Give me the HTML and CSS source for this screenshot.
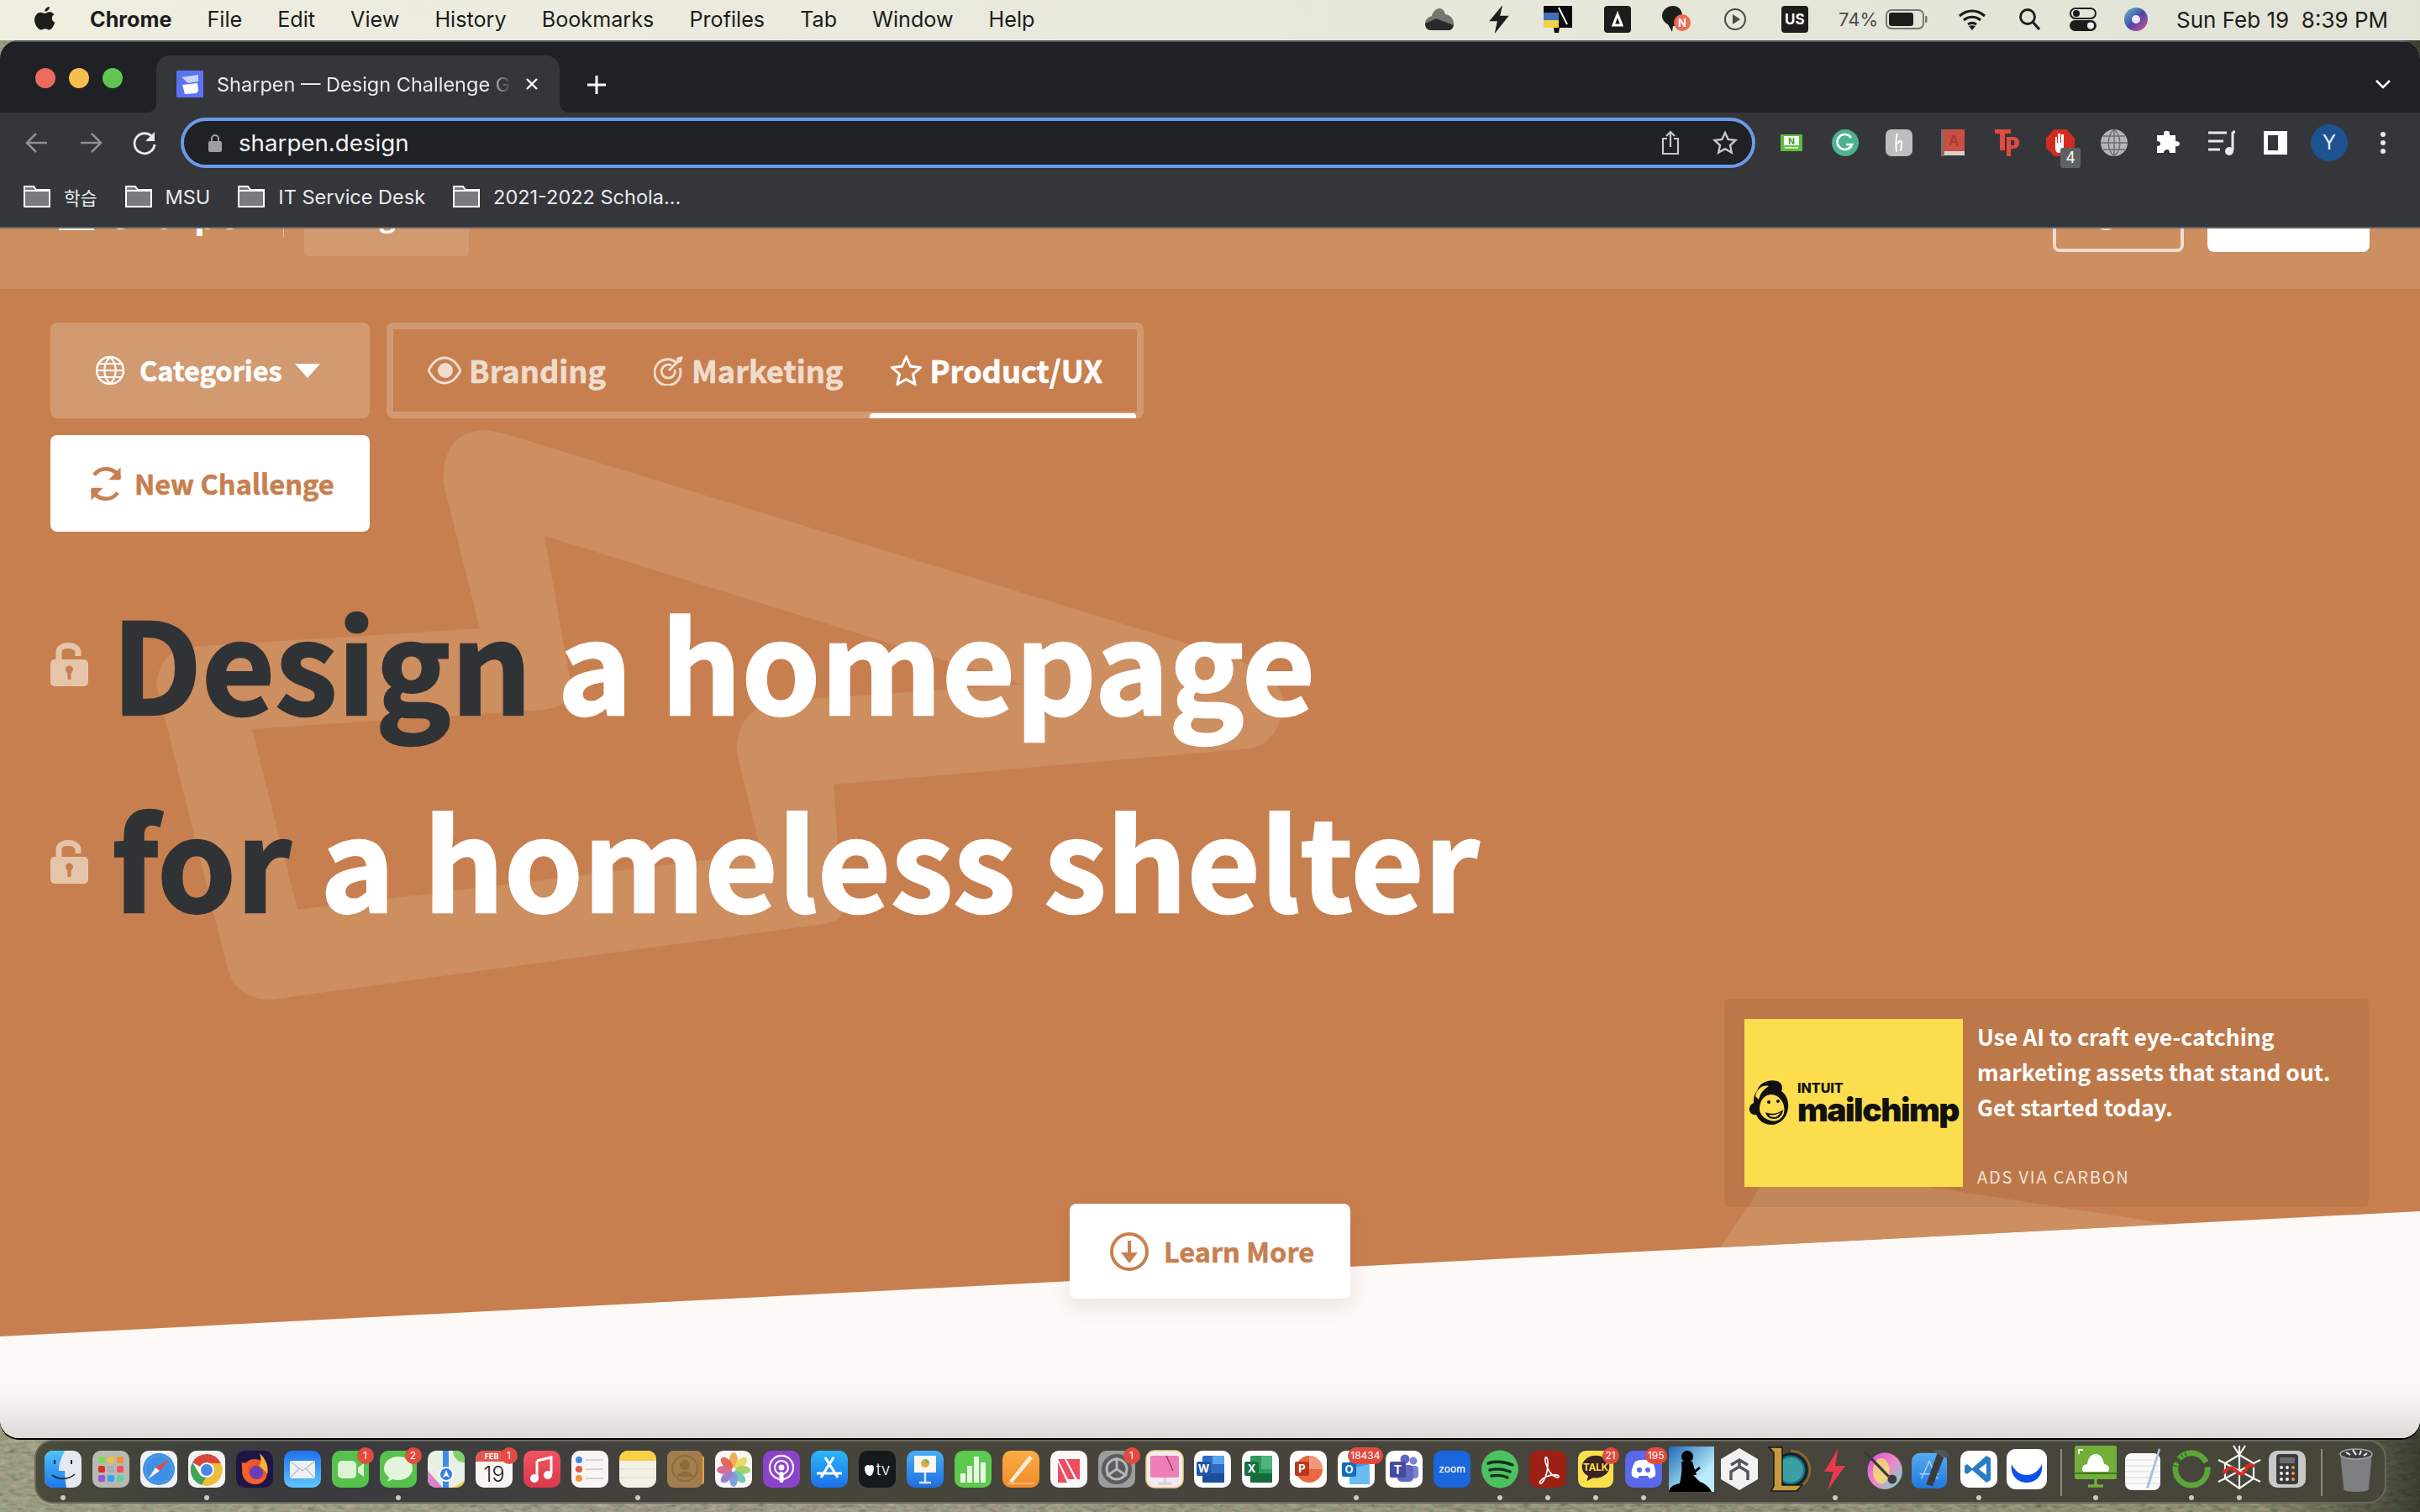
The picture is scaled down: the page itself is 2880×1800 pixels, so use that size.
FILE: index.html
```html
<!DOCTYPE html>
<html lang="en">
<head>
<meta charset="utf-8">
<title>Sharpen — Design Challenge Generator</title>
<link rel="stylesheet" href="styles.css">
</head>
<body>
<svg class="wall" width="2880" height="1800" aria-hidden="true">
  <defs>
    <filter id="grass" x="0" y="0" width="100%" height="100%">
      <feTurbulence type="fractalNoise" baseFrequency="0.09 0.22" numOctaves="4" seed="7"/>
      <feColorMatrix type="matrix" values="0.9 0.4 0 0 -0.12  0.6 0.7 0 0 -0.12  0.5 0.4 0 0 -0.12  0 0 0 0 1"/>
    </filter>
    <linearGradient id="wallshade" x1="0" x2="1" y1="0" y2="0">
      <stop offset="0" stop-color="#80836e" stop-opacity=".6"/>
      <stop offset=".3" stop-color="#7d7672" stop-opacity=".55"/>
      <stop offset=".93" stop-color="#5f6148" stop-opacity=".55"/>
      <stop offset="1" stop-color="#23261e" stop-opacity=".85"/>
    </linearGradient>
  </defs>
  <rect width="2880" height="1800" filter="url(#grass)"/>
  <rect width="2880" height="1800" fill="url(#wallshade)"/>
</svg>

<div class="desktop">
  <header class="menubar">
    <svg class="apple" viewBox="0 0 26 32"><path d="M19 1c.3 2.400-2.300 6-5.800 5.700C12.900 4 15.700 1.200 19 1zM13.300 9c1.300 0 3-1.700 5.600-1.700 1.200 0 4 .4 5.500 3-3.800 2.300-3.300 7.800.9 9.500-.9 2.800-3.600 8.700-6.700 8.700-1.800 0-2.600-1.200-4.800-1.200-2.300 0-3 1.200-4.800 1.200C5.600 28.500 1 22.500 1 17 1 11 5 7.700 8.500 7.700c2 0 3.600 1.300 4.800 1.300z" fill="#1d1d1b"/></svg>
    <span class="menu-app">Chrome</span>
    <span class="menu-item">File</span>
    <span class="menu-item">Edit</span>
    <span class="menu-item">View</span>
    <span class="menu-item">History</span>
    <span class="menu-item">Bookmarks</span>
    <span class="menu-item">Profiles</span>
    <span class="menu-item">Tab</span>
    <span class="menu-item">Window</span>
    <span class="menu-item">Help</span>
    <div class="status status-first"><svg width="40" height="30" viewBox="0 0 40 30"><path d="M20 2c4 0 6 3 7 7 5 0 10 5 10 11 0 5-3 8-7 8H10c-4 0-7-3-7-8 0-5 4-8 8-9 1-5 5-9 9-9z" fill="#767670"/><path d="M3 20l13-6 21 8c-1 4-3 6-7 6H10c-4 0-7-3-7-8z" fill="#2a2a28"/></svg></div>
    <div class="status"><svg width="26" height="34" viewBox="0 0 24 32"><path d="M16 0 1 18h9L7 32l16-20h-10z" fill="#1d1d1b"/></svg></div>
    <div class="status"><svg width="36" height="32" viewBox="0 0 36 32"><path d="M1 0h34v26H20l-1 6h-5l-1-6H1z" fill="#0b0b0b"/><path d="M19 2l10 20" stroke="#fff" stroke-width="2"/><rect x="1" y="8" width="18" height="9" fill="#3f70b8"/><rect x="1" y="17" width="18" height="9" fill="#f0d24a"/></svg></div>
    <div class="status"><svg width="32" height="32" viewBox="0 0 32 32"><rect width="32" height="32" rx="4" fill="#1d1d1b"/><path d="M16 10l-5 13h10z" fill="none" stroke="#fff" stroke-width="3"/></svg></div>
    <div class="status"><svg width="36" height="32" viewBox="0 0 36 32"><path d="M14 0c7 0 11 5 11 12s-5 12-11 12l-1 7-5-9C4 20 1 16 1 12 1 5 7 0 14 0z" fill="#1d1d1b"/><circle cx="25" cy="20" r="10" fill="#ee6a52"/><text x="25" y="25" class="svg-text" font-size="13" fill="#fff" text-anchor="middle">N</text></svg></div>
    <div class="status"><svg width="28" height="28" viewBox="0 0 28 28"><circle cx="14" cy="14" r="12" fill="none" stroke="#4a4a46" stroke-width="2"/><path d="M11 8l9 6-9 6z" fill="#4a4a46"/></svg></div>
    <div class="status"><span class="us-box">US</span></div>
    <span class="battery-pct">74%</span>
    <svg class="battery" width="50" height="24" viewBox="0 0 50 24"><rect x="1" y="1" width="44" height="22" rx="6" fill="none" stroke="#77776f" stroke-width="2"/><rect x="4" y="4" width="29" height="16" rx="3" fill="#1d1d1b"/><rect x="47" y="8" width="2.500" height="8" rx="1" fill="#77776f"/></svg>
    <div class="status status-wifi"><svg width="34" height="26" viewBox="0 0 34 26"><path d="M2 9c9-8 21-8 30 0M7 14c6-5 14-5 20 0M12 19c3-2 7-2 10 0" fill="none" stroke="#1d1d1b" stroke-width="3.200"/><path d="M17 26l-4-5c2-1 6-1 8 0z" fill="#1d1d1b"/></svg></div>
    <div class="status status-search"><svg width="28" height="28" viewBox="0 0 28 28"><circle cx="12" cy="11" r="8.500" fill="none" stroke="#1d1d1b" stroke-width="2.800"/><path d="M18 17l8 9" stroke="#1d1d1b" stroke-width="3.200"/></svg></div>
    <div class="status status-control"><svg width="32" height="28" viewBox="0 0 32 28"><rect x="1" y="1" width="30" height="12" rx="6" fill="none" stroke="#1d1d1b" stroke-width="2"/><circle cx="8" cy="7" r="4" fill="#1d1d1b"/><rect x="0" y="15" width="32" height="13" rx="6.500" fill="#1d1d1b"/><circle cx="25" cy="21.500" r="4" fill="#eee"/></svg></div>
    <div class="status status-siri"><svg width="30" height="30" viewBox="0 0 30 30"><defs><linearGradient id="siri" x1="0" y1="0" x2="1" y2="1"><stop offset="0" stop-color="#56d0c6"/><stop offset=".5" stop-color="#4b47a8"/><stop offset="1" stop-color="#e0508e"/></linearGradient></defs><circle cx="15" cy="15" r="14" fill="url(#siri)"/><circle cx="15" cy="15" r="5" fill="#e9e6f2"/></svg></div>
    <span class="clock">Sun Feb 19&nbsp; 8:39 PM</span>
  </header>

  <main class="window">
    <div class="titlebar">
      <div class="lights"><i class="light light-red"></i><i class="light light-yellow"></i><i class="light light-green"></i></div>
      <div class="tab">
        <svg class="favicon" viewBox="0 0 32 32"><rect width="32" height="32" fill="#5b73f0"/><path d="M6 8l20-3v8l-12 2z" fill="#c9d2fb"/><path d="M7 17l18-2 1 9-2 3-14 1z" fill="#fff"/></svg>
        <span class="tab-title">Sharpen — Design Challenge Generator</span>
        <svg class="tab-close" width="18" height="18" viewBox="0 0 18 18"><path d="M3 3l12 12M15 3L3 15" stroke="#fff" stroke-width="2.400"/></svg>
      </div>
      <svg class="tab-new" width="24" height="24" viewBox="0 0 24 24"><path d="M12 1v22M1 12h22" stroke="#fff" stroke-width="3"/></svg>
      <svg class="tab-list" width="20" height="12" viewBox="0 0 20 12"><path d="M2 2l8 8 8-8" fill="none" stroke="#fff" stroke-width="2.600"/></svg>
    </div>

    <div class="toolbar">
      <div class="tool"><svg width="30" height="30" viewBox="0 0 30 30"><path d="M27 15H4M14 4L3 15l11 11" fill="none" stroke="#8e9094" stroke-width="2.600"/></svg></div>
      <div class="tool"><svg width="30" height="30" viewBox="0 0 30 30"><path d="M3 15h23M16 4l11 11-11 11" fill="none" stroke="#8e9094" stroke-width="2.600"/></svg></div>
      <div class="tool"><svg width="30" height="30" viewBox="0 0 30 30"><path d="M25 9a12 12 0 1 0 2 8" fill="none" stroke="#e8eaed" stroke-width="2.800"/><path d="M27 2v11H16z" fill="#e8eaed"/></svg></div>
      <div class="omnibox">
        <svg class="lock" width="16" height="22" viewBox="0 0 16 22"><path d="M4 10V6a4 4 0 0 1 8 0v4" fill="none" stroke="#9aa0a6" stroke-width="2"/><rect y="9" width="16" height="13" rx="2" fill="#9aa0a6"/></svg>
        <span class="url">sharpen.design</span>
        <svg class="omni-share" width="24" height="30" viewBox="0 0 24 30"><path d="M8 10H3v18h18V10h-5M12 20V2M7 7l5-5 5 5" fill="none" stroke="#c6c8cb" stroke-width="2.200"/></svg>
        <svg class="omni-star" width="30" height="30" viewBox="0 0 30 30"><path d="M15 3l3.700 8 8.800 1-6.500 6 1.800 8.700L15 22.200 7.200 26.700 9 18l-6.500-6 8.800-1z" fill="none" stroke="#c6c8cb" stroke-width="2.400"/></svg>
      </div>
      <div class="tool tool-first"><svg width="26" height="20" viewBox="0 0 26 20"><rect width="26" height="20" fill="#5ebd3e"/><rect x="4" y="2" width="18" height="11" fill="#fff"/><text x="13" y="12" class="svg-text" font-size="10" fill="#3d9a26" text-anchor="middle">N</text><rect x="5" y="15" width="16" height="1.500" fill="#fff"/></svg></div>
      <div class="tool"><svg width="32" height="32" viewBox="0 0 32 32"><circle cx="16" cy="16" r="16" fill="#4cb391"/><path d="M23 10a9 9 0 1 0 1 8h-7" fill="none" stroke="#fff" stroke-width="2.600"/></svg></div>
      <div class="tool"><svg width="32" height="32" viewBox="0 0 32 32"><rect width="32" height="32" rx="7" fill="#bdbdbd"/><path d="M14 5c-2 7-2 14-1 22M14 17c3-5 6-3 5 1l-1 8" fill="none" stroke="#fff" stroke-width="2"/></svg></div>
      <div class="tool"><svg width="28" height="32" viewBox="0 0 28 32"><rect x="2" width="26" height="26" fill="#c94f43"/><rect y="0" width="4" height="32" fill="#8c6660"/><rect x="4" y="26" width="24" height="5" fill="#d8d2cc"/><text x="15" y="19" class="svg-text" font-size="16" fill="#a83b32" text-anchor="middle">A</text></svg></div>
      <div class="tool"><svg width="32" height="34" viewBox="0 0 32 34"><path d="M2 1h19v5h-7v20H8V6H2z" fill="#e04a41"/><path d="M16 10h8c5 0 7 3 7 7s-3 7-7 7h-3v9h-5zM21 14v6h3c2 0 2-6 0-6z" fill="#e04a41"/></svg></div>
      <div class="tool tool-abp"><svg width="34" height="32" viewBox="0 0 34 32"><path d="M10 0h14l10 10v12L24 32H10L0 22V10z" fill="#d22c22"/><path d="M11 22V9l2 0v7h1V5h3v11h1V6h3v14c0 5-3 8-6 8s-4-3-4-6z" fill="#fff"/></svg><span class="ext-badge">4</span></div>
      <div class="tool"><svg width="32" height="32" viewBox="0 0 32 32"><circle cx="16" cy="16" r="16" fill="#b4b5b7"/><path d="M16 0v32M0 16h32M3 8h26M3 24h26M16 0c-9 8-9 24 0 32M16 0c9 8 9 24 0 32" fill="none" stroke="#6d6e72" stroke-width="1.400"/></svg></div>
      <div class="tool"><svg width="30" height="30" viewBox="0 0 30 30"><path d="M11 3c0-3 7-3 7 0v3h7v7c3 0 5 1 5 3s-2 4-5 3v8h-7c0-3-1-4-3-4s-4 1-4 4H3v-8c3 0 4-1 4-3s-1-3-4-3V6h8z" fill="#fff" transform="translate(-1 0)"/></svg></div>
      <div class="tool"><svg width="32" height="30" viewBox="0 0 32 30"><path d="M0 3h22M0 13h18M0 23h14" stroke="#e8eaed" stroke-width="3"/><path d="M29 2v22" stroke="#e8eaed" stroke-width="3"/><circle cx="25" cy="25" r="5" fill="#e8eaed"/><path d="M29 2h3" stroke="#e8eaed" stroke-width="3"/></svg></div>
      <div class="tool"><svg width="28" height="28" viewBox="0 0 28 28"><rect width="28" height="28" fill="#fff"/><rect x="5" y="5" width="12" height="18" fill="#35363a"/></svg></div>
      <div class="tool"><span class="avatar">Y</span></div>
      <div class="tool"><svg width="6" height="26" viewBox="0 0 6 26"><circle cx="3" cy="3" r="3" fill="#e8eaed"/><circle cx="3" cy="13" r="3" fill="#e8eaed"/><circle cx="3" cy="23" r="3" fill="#e8eaed"/></svg></div>
    </div>

    <nav class="bookmarks">
      <span class="bookmark"><svg class="folder" viewBox="0 0 32 26"><path d="M1 1h11l3 4h16v20H1z" fill="#777a7f" stroke="#fff" stroke-width="2"/><path d="M1 6h30" stroke="#fff" stroke-width="2"/></svg><span class="ko">학습</span></span>
      <span class="bookmark"><svg class="folder" viewBox="0 0 32 26"><path d="M1 1h11l3 4h16v20H1z" fill="#777a7f" stroke="#fff" stroke-width="2"/><path d="M1 6h30" stroke="#fff" stroke-width="2"/></svg>MSU</span>
      <span class="bookmark"><svg class="folder" viewBox="0 0 32 26"><path d="M1 1h11l3 4h16v20H1z" fill="#777a7f" stroke="#fff" stroke-width="2"/><path d="M1 6h30" stroke="#fff" stroke-width="2"/></svg>IT Service Desk</span>
      <span class="bookmark"><svg class="folder" viewBox="0 0 32 26"><path d="M1 1h11l3 4h16v20H1z" fill="#777a7f" stroke="#fff" stroke-width="2"/><path d="M1 6h30" stroke="#fff" stroke-width="2"/></svg>2021-2022 Schola...</span>
    </nav>

    <section class="page">
      <div class="hero-bg">
        <svg class="watermark" width="2880" height="1440" viewBox="0 272 2880 1440" aria-hidden="true">
          <path fill-rule="evenodd" fill="#cd8e60" d="M600 516 1461 781Q1528 805 1528 839Q1520 885 1489 891L992 934 1003 1085Q1002 1098 973 1101L322 1190Q280 1190 270 1150L186 815Q190 775 226 770L571 748 528 576Q525 515 576 512ZM648 638 681 824Q678 840 647 845L300 868 354 1083 906 1016 877 896Q875 840 934 834L1217 815Z"/>
          <path fill="#cd8e60" d="M2212 1400 2581 1457 2037 1500 2085 1430Q2092 1405 2120 1400Z"/>
        </svg>
      </div>
      <div class="nav">
        <div class="brand">
          <svg class="brand-mark" width="42" height="30" viewBox="0 0 42 30"><path d="M0 20h42v10H0z" fill="#fff"/></svg>
          <span class="brand-name">Sharpen</span>
        </div>
        <span class="nav-sep"></span>
        <span class="nav-box">Design</span>
        <span class="nav-links">About&nbsp;&nbsp;Get Lessons Plans</span>
        <span class="nav-btn nav-btn-line">Log in</span>
        <span class="nav-btn nav-btn-solid">Sign up</span>
      </div>

      <div class="hero">
        <div class="controls">
          <button class="btn btn-cats">
            <svg width="34" height="36" viewBox="0 0 34 36"><circle cx="17" cy="18" r="16" fill="none" stroke="#fff" stroke-width="2.600"/><path d="M17 2c-9 9-9 23 0 32M17 2c9 9 9 23 0 32M1 18h32M4 10h26M4 26h26" fill="none" stroke="#fff" stroke-width="2.200"/></svg>
            <span>Categories</span>
            <svg class="caret" width="30" height="18" viewBox="0 0 30 18"><path d="M0 1h30L15 18z" fill="#fff"/></svg>
          </button>
          <div class="cat-tabs">
            <div class="cat-tab">
              <svg width="40" height="34" viewBox="0 0 40 34"><path d="M1 17C6 7 13 2 20 2s14 5 19 15c-5 10-12 15-19 15S6 27 1 17z" fill="none" stroke="#f0dccd" stroke-width="3"/><circle cx="21" cy="17" r="9" fill="#f0dccd"/></svg>
              <span>Branding</span>
            </div>
            <div class="cat-tab">
              <svg width="36" height="36" viewBox="0 0 36 36"><path d="M28 10a15.500 15.500 0 1 0 3 5M21 12a8 8 0 1 0 4 5" fill="none" stroke="#f0dccd" stroke-width="3"/><path d="M18 18L34 2" stroke="#f0dccd" stroke-width="3"/><path d="M27 3l7-2-1 7-5 2z" fill="#f0dccd"/></svg>
              <span>Marketing</span>
            </div>
            <div class="cat-tab cat-tab-on">
              <svg width="37" height="36" viewBox="0 0 37 36"><path d="M18.500 2l5 11 12 1.500-9 8 2.500 12-10.500-6-10.500 6 2.500-12-9-8L13.500 13z" fill="none" stroke="#fff" stroke-width="3"/></svg>
              <span>Product/UX</span>
            </div>
          </div>
        </div>
        <button class="btn btn-new">
          <svg width="42" height="42" viewBox="0 0 36 36"><path d="M32 12A15 15 0 0 0 6 9M4 24a15 15 0 0 0 26 3" fill="none" stroke="#c87f4f" stroke-width="4"/><path d="M33 1v13H21zM3 35V22h12z" fill="#c87f4f"/></svg>
          <span>New Challenge</span>
        </button>

        <h1 class="headline">
          <div class="line line-one">
            <svg class="unlock" width="45" height="54" viewBox="0 0 45 54"><path d="M10 24V13C10 3 32 3 33 13v5" fill="none" stroke="#e6c4aa" stroke-width="7"/><rect y="22" width="45" height="32" rx="5" fill="#e6c4aa"/><circle cx="22.500" cy="34" r="4.500" fill="#c87f4f"/><rect x="20.500" y="35" width="4" height="11" fill="#c87f4f"/></svg>
            <span class="word-dark">Design</span> <span class="word-light">a homepage</span>
          </div>
          <div class="line line-two">
            <svg class="unlock" width="45" height="54" viewBox="0 0 45 54"><path d="M10 24V13C10 3 32 3 33 13v5" fill="none" stroke="#e6c4aa" stroke-width="7"/><rect y="22" width="45" height="32" rx="5" fill="#e6c4aa"/><circle cx="22.500" cy="34" r="4.500" fill="#c87f4f"/><rect x="20.500" y="35" width="4" height="11" fill="#c87f4f"/></svg>
            <span class="word-dark">for</span> <span class="word-light">a homeless shelter</span>
          </div>
        </h1>
      </div>

      <aside class="ad">
        <div class="ad-image">
          <svg class="chimp" width="56" height="56" viewBox="0 0 56 56"><path d="M10 14C12 4 24-1 34 2c6 2 7 8 5 12 6 4 9 12 8 20-1 12-10 20-20 20-9 0-15-5-18-12-5 1-9-3-8-8 1-4 3-5 5-6 0-5 0-10 4-14z" fill="#111"/><path d="M8 20C10 10 18 6 24 8 18 12 14 16 12 24z" fill="#fbdd4e"/><path d="M16 24c4-6 12-8 18-4 6 4 10 12 8 20-2 8-10 11-16 9-8-2-13-8-13-14 0-4 1-8 3-11z" fill="#fbdd4e"/><circle cx="24" cy="27" r="2" fill="#111"/><circle cx="35" cy="26" r="2" fill="#111"/><path d="M20 39c6 3 16 2 21-3-1 8-6 11-11 11s-9-3-10-8z" fill="#111"/><path d="M24 42c5 1 10 0 14-3-2 4-5 6-8 6s-5-1-6-3z" fill="#fbdd4e"/></svg>
          <div class="ad-logo"><span class="ad-intuit">INTUIT</span><span class="ad-mailchimp">mailchimp</span></div>
        </div>
        <div class="ad-copy">
          <p class="ad-text">Use AI to craft eye-catching marketing assets that stand out. Get started today.</p>
          <span class="ad-via">ADS VIA CARBON</span>
        </div>
      </aside>

      <button class="btn btn-learn">
        <svg width="50" height="50" viewBox="0 0 50 50"><circle cx="25" cy="25" r="21" fill="none" stroke="#c87f4f" stroke-width="4"/><path d="M25 12v20" stroke="#c87f4f" stroke-width="4"/><path d="M15 26h20L25 39z" fill="#c87f4f"/></svg>
        <span>Learn More</span>
      </button>
    </section>
  </main>

  <footer class="dock">
    <div class="dock-item on"><svg viewBox="0 0 44 44"><defs><clipPath id="sq"><rect width="44" height="44" rx="10"/></clipPath><linearGradient id="fb" x1="0" y1="0" x2="0" y2="1"><stop offset="0" stop-color="#4cc4fb"/><stop offset="1" stop-color="#1e78ea"/></linearGradient></defs><rect width="44" height="44" rx="10" fill="#e4e8ef"/><path d="M10 0h14c-4 8-7 15-7 24h7c0 7 1 14 2 20H10A10 10 0 0 1 0 34V10A10 10 0 0 1 10 0z" fill="url(#fb)"/><path d="M12 11v5M32 11v5" stroke="#222" stroke-width="2"/><path d="M9 29c8 6 19 6 27-1" fill="none" stroke="#222" stroke-width="1.600"/></svg></div>
    <div class="dock-item"><svg viewBox="0 0 44 44"><rect width="44" height="44" rx="10" fill="#b9b9b3"/><g><rect x="7" y="7" width="8" height="8" rx="2" fill="#7fd95a"/><rect x="18" y="7" width="8" height="8" rx="2" fill="#f2c23b"/><rect x="29" y="7" width="8" height="8" rx="2" fill="#ee9532"/><rect x="7" y="18" width="8" height="8" rx="2" fill="#d7322a"/><rect x="18" y="18" width="8" height="8" rx="2" fill="#a7adb0"/><rect x="29" y="18" width="8" height="8" rx="2" fill="#ee4f6b"/><rect x="7" y="29" width="8" height="8" rx="2" fill="#9a55d6"/><rect x="18" y="29" width="8" height="8" rx="2" fill="#37a0f5"/><rect x="29" y="29" width="8" height="8" rx="2" fill="#58d4a7"/></g></svg></div>
    <div class="dock-item"><svg viewBox="0 0 44 44"><rect width="44" height="44" rx="10" fill="#f2f2f2"/><circle cx="22" cy="22" r="19" fill="#3d90e6"/><circle cx="22" cy="22" r="16" fill="none" stroke="#a7d0f5" stroke-width="1" stroke-dasharray="1 2"/><path d="M35 10L18 20l5 4z" fill="#e8483e"/><path d="M9 34l9-14 5 4z" fill="#f4f4f4"/></svg></div>
    <div class="dock-item on"><svg viewBox="0 0 44 44"><rect width="44" height="44" rx="10" fill="#f4f4f4"/><path d="M5 14a19 19 0 0 1 34 1H22a8 8 0 0 0-8 4z" fill="#d8473b"/><path d="M5 14l9 15a8 8 0 0 0 8 2l-6 10A19 19 0 0 1 5 14z" fill="#3fa557"/><path d="M39 15a19 19 0 0 1-23 26l6-10a8 8 0 0 0 7-12 8 8 0 0 0-7-4z" fill="#eebd3a"/><circle cx="22" cy="23" r="9" fill="#fff"/><circle cx="22" cy="23" r="7" fill="#4a86e8"/></svg></div>
    <div class="dock-item"><svg viewBox="0 0 44 44"><rect width="44" height="44" rx="10" fill="#1f1545"/><circle cx="22" cy="25" r="15" fill="#e8552f"/><path d="M28 3c8 7 11 17 9 25-3-5-6-7-10-8 3-5 3-11 1-17z" fill="#f7b32c"/><path d="M7 14c-1 10 4 24 15 26 8 0 13-4 15-12-6 9-18 7-22 0-3-5-1-10 2-12z" fill="#f7622c"/><circle cx="24" cy="26" r="8" fill="#6a3fb5"/></svg></div>
    <div class="dock-item"><svg viewBox="0 0 44 44"><defs><linearGradient id="mail" x1="0" y1="0" x2="0" y2="1"><stop offset="0" stop-color="#1f72ee"/><stop offset="1" stop-color="#5fc6fb"/></linearGradient></defs><rect width="44" height="44" rx="10" fill="url(#mail)"/><rect x="7" y="12" width="30" height="21" rx="2" fill="#eef0f3"/><path d="M8 13l14 11 14-11M8 32l10-11M36 32L26 21" fill="none" stroke="#b9bdc4" stroke-width="1.200"/></svg></div>
    <div class="dock-item"><svg viewBox="0 0 44 44"><rect width="44" height="44" rx="10" fill="#56c14d"/><rect x="7" y="12" width="22" height="21" rx="5" fill="#d9f3d3"/><path d="M31 20l7-5v16l-7-5z" fill="#d9f3d3"/></svg><span class="badge">1</span></div>
    <div class="dock-item on"><svg viewBox="0 0 44 44"><rect width="44" height="44" rx="10" fill="#56c14d"/><ellipse cx="22" cy="21" rx="17" ry="14" fill="#e2f5dc"/><path d="M12 30l-3 7 9-4z" fill="#e2f5dc"/></svg><span class="badge">2</span></div>
    <div class="dock-item"><svg viewBox="0 0 44 44"><g clip-path="url(#sq)"><rect width="44" height="44" fill="#e8f0e4"/><path d="M0 24L18 44H0z" fill="#d983c8"/><path d="M30 0h14v14C36 14 30 8 30 0z" fill="#7fd167"/><path d="M18 0h7v44h-7z" fill="#3f8ce8"/><path d="M30 44l14-8v8z" fill="#f4c63a"/></g><circle cx="22" cy="28" r="9" fill="#fff"/><circle cx="22" cy="28" r="7" fill="#2f80ed"/><path d="M22 23l4 9-4-2-4 2z" fill="#fff"/></svg></div>
    <div class="dock-item"><svg viewBox="0 0 44 44"><rect width="44" height="44" rx="10" fill="#f7f6f3"/><path d="M0 13V10A10 10 0 0 1 10 0h24a10 10 0 0 1 10 10v3z" fill="#e4574c"/><text x="19" y="10" class="svg-text" font-size="9" fill="#fff" text-anchor="middle">FEB</text><text x="22" y="37" class="svg-thin" font-size="25" fill="#222" text-anchor="middle">19</text></svg><span class="badge">1</span></div>
    <div class="dock-item"><svg viewBox="0 0 44 44"><defs><linearGradient id="music" x1="0" y1="0" x2="0" y2="1"><stop offset="0" stop-color="#f1545f"/><stop offset="1" stop-color="#d93a4d"/></linearGradient></defs><rect width="44" height="44" rx="10" fill="url(#music)"/><path d="M16 12l17-4v20" fill="none" stroke="#fff" stroke-width="3"/><path d="M16 12v21" stroke="#fff" stroke-width="3"/><circle cx="13" cy="33" r="5" fill="#fff"/><circle cx="29" cy="29" r="5" fill="#fff"/></svg></div>
    <div class="dock-item"><svg viewBox="0 0 44 44"><rect width="44" height="44" rx="10" fill="#f7f6f3"/><circle cx="9" cy="11" r="4" fill="#3d87e6"/><circle cx="9" cy="22" r="4" fill="#e4574c"/><circle cx="9" cy="33" r="4" fill="#ee9532"/><path d="M17 11h21M17 22h21M17 33h21" stroke="#c9c9c9" stroke-width="1.500"/></svg></div>
    <div class="dock-item on"><svg viewBox="0 0 44 44"><rect width="44" height="44" rx="10" fill="#f3f0e6"/><path d="M0 12V10A10 10 0 0 1 10 0h24a10 10 0 0 1 10 10v2z" fill="#f8cf45"/><path d="M0 22h44M0 32h44" stroke="#dcd9d0" stroke-width="1"/></svg></div>
    <div class="dock-item"><svg viewBox="0 0 44 44"><rect x="32" y="6" width="12" height="34" rx="3" fill="#e9a13b"/><rect width="42" height="44" rx="8" fill="#a27d4d"/><circle cx="21" cy="21" r="15" fill="none" stroke="#8d6a3e" stroke-width="2"/><circle cx="21" cy="17" r="6" fill="#8d6a3e"/><path d="M10 31c4-8 18-8 22 0" fill="#8d6a3e"/></svg></div>
    <div class="dock-item"><svg viewBox="0 0 44 44"><rect width="44" height="44" rx="10" fill="#f7f7f7"/><g opacity=".85"><ellipse cx="22" cy="11" rx="5" ry="9" fill="#f2a23a"/><ellipse cx="31" cy="15" rx="5" ry="9" fill="#e9d64a" transform="rotate(45 31 15)"/><ellipse cx="33" cy="23" rx="9" ry="5" fill="#9ccb4e"/><ellipse cx="29" cy="31" rx="5" ry="9" fill="#5ec2a4" transform="rotate(-45 29 31)"/><ellipse cx="22" cy="34" rx="5" ry="9" fill="#6d8fd8"/><ellipse cx="14" cy="31" rx="5" ry="9" fill="#8d6ccb" transform="rotate(45 14 31)"/><ellipse cx="11" cy="23" rx="9" ry="5" fill="#d1578d"/><ellipse cx="14" cy="15" rx="5" ry="9" fill="#e34f3f" transform="rotate(-45 14 15)"/></g></svg></div>
    <div class="dock-item"><svg viewBox="0 0 44 44"><rect width="44" height="44" rx="10" fill="#8a44c9"/><circle cx="22" cy="20" r="14" fill="none" stroke="#f2e6fb" stroke-width="2.400"/><circle cx="22" cy="20" r="8" fill="none" stroke="#f2e6fb" stroke-width="2.400"/><circle cx="22" cy="20" r="3.500" fill="#fff"/><rect x="19.500" y="25" width="5" height="13" rx="2.500" fill="#fff"/></svg></div>
    <div class="dock-item"><svg viewBox="0 0 44 44"><defs><linearGradient id="store" x1="0" y1="0" x2="0" y2="1"><stop offset="0" stop-color="#2ab7fa"/><stop offset="1" stop-color="#1b6fea"/></linearGradient></defs><rect width="44" height="44" rx="10" fill="url(#store)"/><path d="M17 8l15 24M27 8L12 32M7 27h30" stroke="#fff" stroke-width="3.200"/></svg></div>
    <div class="dock-item"><svg viewBox="0 0 44 44"><rect width="44" height="44" rx="10" fill="#141a1c"/><text x="29" y="29" class="svg-thin" font-size="19" fill="#fff" text-anchor="middle">tv</text><path d="M6 20c0-4 5-5 6-3 1-2 5-1 5 2 0 5-2 10-5 10s-6-4-6-9z" fill="#fff" transform="translate(1 1)"/></svg></div>
    <div class="dock-item"><svg viewBox="0 0 44 44"><defs><linearGradient id="key" x1="0" y1="0" x2="0" y2="1"><stop offset="0" stop-color="#46aff6"/><stop offset="1" stop-color="#1e6fe0"/></linearGradient></defs><rect width="44" height="44" rx="10" fill="url(#key)"/><rect x="9" y="6" width="26" height="20" fill="#f7f7f7"/><circle cx="22" cy="15" r="5" fill="#f2a23a"/><path d="M22 15v-5a5 5 0 0 1 5 5z" fill="#5ec26c"/><path d="M22 26v11M15 38h14" stroke="#dde6ee" stroke-width="2.500"/></svg></div>
    <div class="dock-item"><svg viewBox="0 0 44 44"><rect width="44" height="44" rx="10" fill="#5dc94d"/><rect x="7" y="27" width="6" height="11" fill="#eaf7e5"/><rect x="15" y="18" width="6" height="20" fill="#eaf7e5"/><rect x="23" y="7" width="6" height="31" fill="#eaf7e5"/><rect x="31" y="14" width="6" height="24" fill="#eaf7e5"/></svg></div>
    <div class="dock-item"><svg viewBox="0 0 44 44"><defs><linearGradient id="pg" x1="0" y1="0" x2="0" y2="1"><stop offset="0" stop-color="#f8ae43"/><stop offset="1" stop-color="#f18a2a"/></linearGradient></defs><rect width="44" height="44" rx="10" fill="url(#pg)"/><path d="M8 36L32 6l4 3L12 38z" fill="#fbeedd"/><path d="M6 39h32" stroke="#f9c78c" stroke-width="1.500"/></svg></div>
    <div class="dock-item"><svg viewBox="0 0 44 44"><rect width="44" height="44" rx="10" fill="#f9f9f9"/><path d="M9 10h8l12 24h-8zM19 10h16v24h-3z" fill="#ee4d5f"/><path d="M9 14l11 24H9z" fill="#ee4d5f"/></svg></div>
    <div class="dock-item"><svg viewBox="0 0 44 44"><rect width="44" height="44" rx="10" fill="#9b9d9d"/><circle cx="22" cy="22" r="18" fill="#5a5c5e"/><circle cx="22" cy="22" r="12" fill="none" stroke="#b6b8b9" stroke-width="3"/><path d="M22 22V8M22 22L10 30M22 22l12 8" stroke="#b6b8b9" stroke-width="3"/></svg><span class="badge">1</span></div>
    <div class="dock-item"><svg viewBox="0 0 44 44"><rect width="44" height="44" rx="10" fill="#f0ecef" stroke="#f3cf7e" stroke-width="1.500"/><rect x="5" y="6" width="34" height="26" rx="2" fill="#ee7fb6"/><path d="M22 32v6M14 39h16" stroke="#d8d0dc" stroke-width="3"/><path d="M24 6l8 18" stroke="#7a3b5c" stroke-width="1.200"/></svg></div>
    <div class="dock-item"><svg viewBox="0 0 44 44"><rect width="44" height="44" rx="10" fill="#fff"/><rect x="10" y="6" width="26" height="32" rx="2" fill="#2f6cc6"/><rect x="22" y="6" width="14" height="10" fill="#58a3ee"/><rect x="10" y="27" width="26" height="11" fill="#1c4d9c"/><rect x="3" y="13" width="17" height="17" rx="2" fill="#1f54a8"/><text x="11.500" y="26" class="svg-text" font-size="13" fill="#fff" text-anchor="middle">W</text></svg></div>
    <div class="dock-item"><svg viewBox="0 0 44 44"><rect width="44" height="44" rx="10" fill="#fff"/><rect x="10" y="6" width="26" height="32" rx="2" fill="#2c9a5c"/><rect x="23" y="6" width="13" height="16" fill="#4fb47d"/><rect x="10" y="27" width="26" height="11" fill="#176a3c"/><rect x="3" y="13" width="17" height="17" rx="2" fill="#1a7040"/><text x="11.500" y="26" class="svg-text" font-size="13" fill="#fff" text-anchor="middle">X</text></svg></div>
    <div class="dock-item"><svg viewBox="0 0 44 44"><rect width="44" height="44" rx="10" fill="#fff"/><circle cx="23" cy="22" r="16" fill="#e9693f"/><path d="M23 6a16 16 0 0 1 16 16H23z" fill="#f19a7b"/><rect x="6" y="13" width="17" height="17" rx="2" fill="#b93a1b"/><text x="14.500" y="26" class="svg-text" font-size="13" fill="#fff" text-anchor="middle">P</text></svg></div>
    <div class="dock-item on"><svg viewBox="0 0 44 44"><rect width="44" height="44" rx="10" fill="#fff"/><rect x="14" y="7" width="24" height="26" fill="#3d9de6"/><path d="M14 22l24-6v24H14z" fill="#67bdf0"/><rect x="5" y="14" width="17" height="17" rx="2" fill="#126bc0"/><text x="13.500" y="27" class="svg-text" font-size="13" fill="#fff" text-anchor="middle">O</text></svg><span class="badge badge-wide">18434</span></div>
    <div class="dock-item"><svg viewBox="0 0 44 44"><rect width="44" height="44" rx="10" fill="#fff"/><circle cx="33" cy="12" r="4.500" fill="#7c83d4"/><rect x="26" y="18" width="13" height="15" rx="4" fill="#7c83d4"/><circle cx="23" cy="10" r="5.500" fill="#5f67bf"/><rect x="14" y="17" width="19" height="20" rx="5" fill="#5f67bf"/><rect x="5" y="13" width="19" height="19" rx="2" fill="#444c9f"/><text x="14.500" y="28" class="svg-text" font-size="14" fill="#fff" text-anchor="middle">T</text></svg></div>
    <div class="dock-item"><svg viewBox="0 0 44 44"><rect width="44" height="44" rx="10" fill="#1b66dd"/><text x="22" y="26" class="svg-text zoom-word" font-size="12" fill="#fff" text-anchor="middle">zoom</text></svg></div>
    <div class="dock-item on"><svg viewBox="0 0 44 44"><ellipse cx="22" cy="22" rx="22" ry="22.500" fill="#4dc15f"/><path d="M8 15c10-3 20-2 29 2M10 23c8-2 17-1 24 2M12 30c6-1 13-1 19 2" fill="none" stroke="#16301b" stroke-width="3.400" stroke-linecap="round"/></svg></div>
    <div class="dock-item on"><svg viewBox="0 0 44 44"><rect width="44" height="44" rx="10" fill="#9e2014"/><path d="M20 8c-2 0-2 6 4 17 4 6 10 8 11 6 0-3-8-3-15 0-6 3-9 7-7 8 2 1 6-5 8-14 2-8 1-17-1-17z" fill="none" stroke="#f4f0ee" stroke-width="1.800"/></svg></div>
    <div class="dock-item on"><svg viewBox="0 0 44 46"><rect width="44" height="46" rx="10" fill="#fae14c"/><ellipse cx="22" cy="20" rx="17" ry="14" fill="#3a2323"/><path d="M13 30l-2 8 9-5z" fill="#3a2323"/><text x="22" y="25" class="svg-text" font-size="12" fill="#fae14c" text-anchor="middle">TALK</text></svg><span class="badge">21</span></div>
    <div class="dock-item on"><svg viewBox="0 0 44 44"><rect width="44" height="44" rx="10" fill="#5a68ea"/><path d="M12 13c6-3 14-3 20 0 3 5 5 11 4 17-3 2-5 3-7 3l-2-3H17l-2 3c-2 0-4-1-7-3-1-6 1-12 4-17z" fill="#fff"/><circle cx="17" cy="23" r="3" fill="#5a68ea"/><circle cx="27" cy="23" r="3" fill="#5a68ea"/></svg><span class="badge">195</span></div>
    <div class="dock-item"><svg class="icon-kindle" viewBox="0 0 54 54"><defs><linearGradient id="kin" x1="0" y1="0" x2="1" y2="1"><stop offset="0" stop-color="#1e6bb8"/><stop offset=".7" stop-color="#b9ecfb"/></linearGradient></defs><rect width="54" height="54" fill="url(#kin)"/><circle cx="22" cy="12" r="7" fill="#000"/><path d="M15 18h13l5 16h-4l8 8c6 2 11 6 14 12H0c1-6 6-9 13-10 2-9 3-18 2-26z" fill="#000"/><path d="M26 32l10-8 2 2-11 9z" fill="#000"/></svg></div>
    <div class="dock-item"><svg class="icon-tall" viewBox="0 0 44 50"><path d="M22 0l22 13v24L22 50 0 37V13z" fill="#f2f2f2"/><path d="M22 14v8M22 22l-10 6v10M22 22l10 6v10M12 20l10-6 10 6" fill="none" stroke="#55565a" stroke-width="3.500"/></svg></div>
    <div class="dock-item"><svg class="icon-lol" viewBox="0 0 48 54"><circle cx="28" cy="28" r="19" fill="#1c6f7a" stroke="#16202a" stroke-width="3"/><circle cx="28" cy="28" r="15" fill="#3aa0a5"/><path d="M28 5a23 23 0 0 1 0 46" fill="none" stroke="#8c6c2c" stroke-width="2.500"/><path d="M2 1h16v45h24l-7 7H5l3-6V7z" fill="#c79a3e" stroke="#14181e" stroke-width="1.500"/></svg></div>
    <div class="dock-item on"><svg class="icon-tall" viewBox="0 0 44 50"><path d="M26 0l-17 28h11l-7 22 21-29H22z" fill="#e8394c"/></svg></div>
    <div class="dock-item"><svg class="icon-large" viewBox="0 0 44 44"><defs><linearGradient id="kri" x1="0" y1="0" x2="1" y2="1"><stop offset="0" stop-color="#d64bdf"/><stop offset=".5" stop-color="#f088c8"/><stop offset="1" stop-color="#5ee0d0"/></linearGradient></defs><ellipse cx="24" cy="24" rx="19" ry="20" fill="url(#kri)"/><ellipse cx="20" cy="24" rx="9" ry="14" fill="#f5ef60" opacity=".7"/><path d="M2 3l26 27" stroke="#3c3a3a" stroke-width="3"/><circle cx="32" cy="33" r="5" fill="#3c3a3a"/></svg></div>
    <div class="dock-item"><svg class="icon-tall" viewBox="0 0 48 52"><defs><linearGradient id="xc" x1="0" y1="0" x2="0" y2="1"><stop offset="0" stop-color="#57abf0"/><stop offset="1" stop-color="#2177dd"/></linearGradient></defs><rect y="6" width="44" height="44" rx="10" fill="url(#xc)"/><path d="M12 38L22 16l10 22M10 32h24" fill="none" stroke="#a9d2f5" stroke-width="1.500"/><path d="M32 6l8 5-14 36-8-2z" fill="#3c3c3c"/><path d="M28 2h12l8 7-6 3-6-4-6-2z" fill="#555"/></svg></div>
    <div class="dock-item on"><svg viewBox="0 0 44 44"><rect width="44" height="44" rx="10" fill="#fff"/><path d="M31 6l5 3v26l-5 3-17-15-6 5-3-2V18l3-2 6 5zM31 15l-9 7 9 7z" fill="#2a7cc4"/></svg></div>
    <div class="dock-item"><svg class="icon-large" viewBox="0 0 48 48"><rect width="48" height="48" rx="11" fill="#fff"/><path d="M6 18c4 9 11 13 18 13s14-4 18-13c2 12-6 22-18 22S4 30 6 18z" fill="#0d52e8"/></svg></div>
    <div class="dock-sep"></div>
    <div class="dock-item on"><svg class="icon-wide" viewBox="0 0 50 50"><rect width="50" height="40" rx="2" fill="#74ae3a"/><path d="M5 10V5h5" fill="none" stroke="#fff" stroke-width="2"/><path d="M10 31c-3-5 1-9 5-9 1-7 4-12 10-12s9 5 10 12c4 0 8 4 5 9z" fill="#fff"/><path d="M0 33h50" stroke="#3e7a22" stroke-width="2"/><path d="M25 40v7M16 48h18" stroke="#74ae3a" stroke-width="3.500"/></svg></div>
    <div class="dock-item"><svg class="icon-tall" viewBox="0 0 44 50"><rect y="6" width="42" height="44" rx="8" fill="#fafafa"/><path d="M0 14h42M0 21h42M0 28h42M0 35h42M0 42h42" stroke="#d8d8dc" stroke-width="1"/><path d="M40 0l2 2-14 46-3-1z" fill="#a9c0d8"/></svg></div>
    <div class="dock-item on"><svg class="icon-tall" viewBox="0 0 48 50"><circle cx="24" cy="25" r="20" fill="none" stroke="#5ba53a" stroke-width="7" stroke-dasharray="70 6 40 6"/><path d="M4 22a20 20 0 0 1 14-16" fill="none" stroke="#3b7a24" stroke-width="5" stroke-dasharray="2 3"/></svg></div>
    <div class="dock-item on"><svg class="icon-spider" viewBox="0 0 50 54"><path d="M25 12V1M25 12L8 22M25 12l17 10M8 22v18M42 22v18M8 40l17 12 17-12M25 52V12M8 22l34 18M42 22L8 40M0 18l8 4M50 18l-8 4M0 44l8-4M50 44l-8-4M18 1l7 11 7-11" fill="none" stroke="#f2f2f2" stroke-width="2.200"/><path d="M6 34c6-8 10-8 15-3s9 5 12-2 6-6 10-3" fill="none" stroke="#dd2a1e" stroke-width="4"/></svg></div>
    <div class="dock-item"><svg viewBox="0 0 44 44"><rect width="44" height="44" rx="10" fill="#c8c8c6"/><rect x="9" y="4" width="26" height="36" rx="4" fill="#3a3a3c"/><rect x="13" y="8" width="18" height="7" fill="#6c6c6e"/><g fill="#eeeeee"><circle cx="15" cy="20" r="2"/><circle cx="22" cy="20" r="2"/><circle cx="15" cy="27" r="2"/><circle cx="22" cy="27" r="2"/><circle cx="15" cy="34" r="2"/><circle cx="22" cy="34" r="2"/></g><g fill="#ee9532"><circle cx="29" cy="20" r="2"/><circle cx="29" cy="27" r="2"/><circle cx="29" cy="34" r="2"/></g></svg></div>
    <div class="dock-sep"></div>
    <div class="dock-item"><svg class="icon-trash" viewBox="0 0 40 52"><path d="M1 6h38l-4 42c0 3-6 4-15 4S5 51 5 48z" fill="#7c7e80"/><ellipse cx="20" cy="7" rx="19" ry="6" fill="#3d3e40" stroke="#a6a7a9" stroke-width="1.500"/><path d="M8 5l5 3M16 2l4 6M26 3l-2 5M33 6l-4 3" stroke="#f2f2f2" stroke-width="2"/></svg></div>
  </footer>
</div>
</body>
</html>
```
FILE: styles.css
```css
* { box-sizing: border-box; }
html, body { margin: 0; width: 2880px; height: 1800px; overflow: hidden; }
body { position: relative; background: #77786a; font-family: Inter, "Liberation Sans", sans-serif; }
.wall { position: absolute; inset: 0; }
.desktop { position: relative; display: flex; flex-direction: column; height: 1800px; }

/* Menu bar */
.menubar { display: flex; align-items: center; height: 48px; padding: 0 38px 2px 40px; background: linear-gradient(90deg, #eeeee1, #e6e8db 60%, #e0e3d6); color: #1d1d1b; font-size: 25.2px; }
.apple { width: 26px; height: 32px; margin-right: 41px; }
.menu-app { font-weight: 700; margin-right: 42px; }
.menu-item { margin-right: 42px; font-weight: 400; }
.status { display: flex; align-items: center; justify-content: center; width: 70.4px; height: 46px; }
.status-first { margin-left: auto; }
.us-box { display: block; width: 32px; height: 32px; border-radius: 4px; background: #1d1d1b; color: #fff; font-size: 17px; font-weight: 700; line-height: 32px; text-align: center; }
.battery-pct { width: 45px; margin-left: 17px; font-size: 22px; color: #4c4c48; white-space: nowrap; }
.battery { margin-left: 11px; }
.status-wifi { width: 64px; margin-left: 21px; }
.status-search { width: 72px; }
.status-control { width: 56px; }
.status-siri { width: 70px; }
.clock { width: 254px; margin-left: 11px; font-size: 26px; text-align: right; white-space: nowrap; }
.svg-text { font-family: Inter, "Liberation Sans", sans-serif; font-weight: 700; }
.svg-thin { font-family: Inter, "Liberation Sans", sans-serif; font-weight: 300; }
.zoom-word { font-weight: 500; }

/* Window */
.window { display: flex; flex-direction: column; height: 1664px; border-radius: 22px; overflow: hidden; background: #fdf9f6; box-shadow: 0 2px 0 #000, inset 0 2px 0 #5c5d60; }
.titlebar { position: relative; display: flex; align-items: flex-end; flex: none; height: 86px; background: #202124; border-top: 2px solid #55565a; }
.lights { display: flex; gap: 16px; align-self: flex-start; margin: 31px 0 0 42px; }
.light { display: block; width: 24px; height: 24px; border-radius: 50%; }
.light-red { background: #ed6a5e; }
.light-yellow { background: #f5bf4f; }
.light-green { background: #61c554; }
.tab { position: relative; display: flex; align-items: center; width: 480px; height: 68px; margin-left: 40px; padding: 0 24px; border-radius: 16px 16px 0 0; background: #35363a; }
.tab::before, .tab::after { content: ""; position: absolute; bottom: 0; width: 12px; height: 12px; }
.tab::before { left: -12px; background: radial-gradient(circle at 0 0, #202124 12px, #35363a 12.500px); }
.tab::after { right: -12px; background: radial-gradient(circle at 100% 0, #202124 12px, #35363a 12.500px); }
.favicon { flex: none; width: 32px; height: 32px; }
.tab-title { width: 352px; margin-left: 16px; overflow: hidden; white-space: nowrap; font-size: 23.5px; color: #e8eaed; -webkit-mask-image: linear-gradient(90deg, #000 92%, transparent); mask-image: linear-gradient(90deg, #000 92%, transparent); }
.tab-close { flex: none; margin-left: 15px; }
.tab-new { margin: 0 0 21px 32px; }
.tab-list { margin: 0 34px 28px auto; }

/* Toolbar */
.toolbar { display: flex; align-items: center; flex: none; height: 72px; padding: 0 12px; background: #35363a; }
.tool { position: relative; display: flex; align-items: center; justify-content: center; flex: none; width: 64px; height: 60px; }
.tool-first { margin-left: 11px; }
.omnibox { display: flex; align-items: center; flex: none; width: 1874px; height: 60px; margin-left: 11px; padding: 0 17px 0 29px; border: 4px solid #6b9aec; border-radius: 30px; background: #202124; }
.lock { flex: none; }
.url { margin-left: 20px; font-size: 27.7px; color: #f1f3f4; }
.omni-share { margin-left: auto; }
.omni-star { margin-left: 38px; }
.ext-badge { position: absolute; right: 8px; bottom: 0; width: 24px; height: 24px; border-radius: 3px; background: #5f6064; color: #fff; font-size: 18px; line-height: 24px; text-align: center; }
.avatar { display: block; width: 44px; height: 44px; border-radius: 50%; background: #1c5290; color: #e8eaed; font-size: 24px; line-height: 44px; text-align: center; }

/* Bookmarks */
.bookmarks { display: flex; align-items: center; gap: 33px; flex: none; height: 66px; padding: 0 0 8px 28px; background: #35363a; border-bottom: 2px solid #5f6368; font-size: 23.5px; color: #e8eaed; }
.bookmark { display: flex; align-items: center; gap: 16px; white-space: nowrap; }
.folder { width: 32px; height: 26px; }
.ko { font-family: "Noto Sans CJK KR", sans-serif; font-size: 21.5px; }

/* Page */
.page { position: relative; flex: 1; overflow: hidden; background: #fdf9f6; font-family: "Noto Sans CJK KR", "Noto Sans", sans-serif; }
.page::after { content: ""; position: absolute; left: 0; right: 0; bottom: 0; height: 80px; background: linear-gradient(180deg, transparent, rgba(0, 0, 0, .02) 40%, rgba(0, 0, 0, .13)); pointer-events: none; }
.hero-bg { position: absolute; inset: 0; background: #c87f4f; clip-path: polygon(0 0, 2880px 0, 2880px 1170px, 0 1319px); }
.watermark { position: absolute; left: 0; top: 0; }

.nav { position: relative; display: flex; align-items: flex-end; height: 72px; padding: 0 60px 44px; background: #cd8e60; }
.brand { display: flex; align-items: flex-end; margin: 0 0 17px 10px; color: #fff; }
.brand-mark { margin-bottom: 9px; }
.brand-name { margin-left: 18px; font-size: 44px; font-weight: 700; line-height: 60px; }
.nav-sep { flex: none; width: 1px; height: 60px; margin: 0 0 17px 24px; background: #e2bb9f; }
.nav-box { flex: none; display: block; width: 196px; height: 90px; margin: 0 0 -5px 24px; padding-right: 48px; border-radius: 0 0 6px 6px; background: #d29a70; color: #fff; font-size: 34px; font-weight: 700; line-height: 82px; text-align: center; }
.nav-links { margin: 0 36px 19px auto; color: #f3e1d2; font-size: 38px; font-weight: 700; line-height: 50px; white-space: nowrap; }
.nav-btn { display: block; flex: none; height: 80px; border-radius: 0 0 8px 8px; font-size: 34px; font-weight: 700; text-align: center; }
.nav-btn-line { width: 156px; padding-right: 30px; border: 4px solid #f0dccd; color: #f0dccd; line-height: 56px; }
.nav-btn-solid { width: 193px; margin-left: 28px; background: #fff; color: #c87f4f; line-height: 58px; }

.hero { position: relative; padding: 40px 60px 0; }
.controls { display: flex; gap: 20px; }
.btn { display: flex; align-items: center; border: 0; border-radius: 8px; font-family: "Noto Sans CJK KR", "Noto Sans", sans-serif; font-size: 32.5px; font-weight: 700; -webkit-text-stroke: .6px currentColor; }
.btn span { padding-bottom: 3px; }
.btn-cats { flex: none; width: 380px; height: 114px; padding: 0 0 0 54px; background: #d29a70; color: #fff; }
.btn-cats span { margin-left: 18px; }
.caret { margin-left: 15px; }
.cat-tabs { display: flex; align-items: center; flex: none; width: 901px; height: 114px; padding-left: 16px; border: 8px solid #d29a70; border-radius: 8px; color: #f0dccd; font-size: 36.2px; font-weight: 700; -webkit-text-stroke: .6px currentColor; }
.cat-tab { position: relative; display: flex; align-items: center; gap: 9px; height: 98px; padding: 0 32px 0 25px; }
.cat-tab span { padding-bottom: 3px; }
.cat-tab-on { padding-right: 40px; color: #fff; }
.cat-tab-on::after { content: ""; position: absolute; left: 0; right: 0; bottom: -8px; height: 6px; border-radius: 4px 4px 0 0; background: #fff; }
.btn-new { width: 380px; height: 115px; margin-top: 20px; padding: 0 0 0 45px; background: #fff; color: #c87f4f; }
.btn-new span { margin-left: 13px; }

.headline { margin: 35px 0 0; font-size: 150px; font-weight: 700; line-height: 235px; white-space: nowrap; -webkit-text-stroke: 2.500px currentColor; }
.line { display: flex; align-items: flex-start; height: 235px; gap: 0; }
.word-dark { color: #303336; }
.word-light { color: #fff; }
.line-one .word-light { margin-left: 31px; }
.line-two .word-light { margin-left: 35px; }
.unlock { flex: none; margin: 95px 28px 0 0; }
.line-two .unlock { margin-right: 28px; }

.ad { position: absolute; left: 2052px; top: 917px; display: flex; width: 767px; height: 248px; padding: 24px; border-radius: 6px; background: rgba(0, 0, 0, .055); color: #fff; }
.ad-image { display: flex; align-items: center; flex: none; width: 260px; height: 200px; padding-left: 5px; background: #fbdd4e; color: #111; }
.chimp { flex: none; }
.ad-logo { display: flex; flex-direction: column; margin-left: 2px; font-family: Inter, "Liberation Sans", sans-serif; }
.ad-intuit { font-size: 16px; font-weight: 800; line-height: 16px; letter-spacing: 0; }
.ad-mailchimp { font-size: 39px; font-weight: 900; line-height: 36px; letter-spacing: -1.500px; }
.ad-copy { display: flex; flex-direction: column; margin-left: 17px; }
.ad-text { width: 430px; margin: 0; font-size: 26.5px; font-weight: 700; line-height: 42px; }
.ad-via { margin-top: auto; margin-bottom: -2px; font-size: 20px; font-weight: 400; line-height: 28px; letter-spacing: 1.800px; color: #f3e3d6; }

.btn-learn { position: absolute; left: 1273px; top: 1161px; width: 334px; height: 113px; padding: 0 0 0 46px; gap: 16px; background: #fff; color: #c87f4f; box-shadow: 0 10px 24px rgba(90, 50, 20, .1); }

/* Dock */
.dock { display: flex; align-items: flex-start; height: 76px; margin: 2px 40px 0 41px; padding: 11px 0 0 3.500px; border: 2px solid #68695c; border-radius: 22px; background: linear-gradient(90deg, #4a4b3b, #3a3a3e 10%, #3a3b3f 14%, #47443c 30%, #47443d 60%, #46463a 100%); }
.dock-item { position: relative; display: flex; justify-content: center; flex: none; width: 57px; height: 44px; }
.dock-item svg { flex: none; width: 44px; height: 44px; overflow: visible; }
.dock-item svg.icon-kindle { width: 54px; height: 54px; margin-top: -5px; }
.dock-item svg.icon-large { width: 48px; height: 48px; margin-top: -2px; }
.dock-item svg.icon-wide { width: 50px; height: 50px; margin-top: -6px; }
.dock-item svg.icon-tall { width: 46px; height: 50px; margin-top: -3px; }
.dock-item svg.icon-lol { width: 50px; height: 54px; margin-top: -5px; }
.dock-item svg.icon-spider { width: 50px; height: 54px; margin-top: -7px; }
.dock-item svg.icon-trash { width: 40px; height: 52px; margin-top: -3px; }
.dock-item.on::after { content: ""; position: absolute; left: 50%; top: 53px; width: 6px; height: 6px; margin-left: -3px; border-radius: 50%; background: #c9c9c2; }
.dock-sep { flex: none; width: 25px; position: relative; }
.dock-sep::after { content: ""; position: absolute; left: 11px; top: -2px; width: 2px; height: 56px; background: #8a8a7e; }
.badge { position: absolute; top: -4px; right: 1px; min-width: 20px; height: 20px; padding: 0 3px; border-radius: 10px; background: #e34b3f; color: #fff; font-family: Inter, "Liberation Sans", sans-serif; font-size: 12px; line-height: 20px; text-align: center; }
.badge-wide { right: -3px; }
```
